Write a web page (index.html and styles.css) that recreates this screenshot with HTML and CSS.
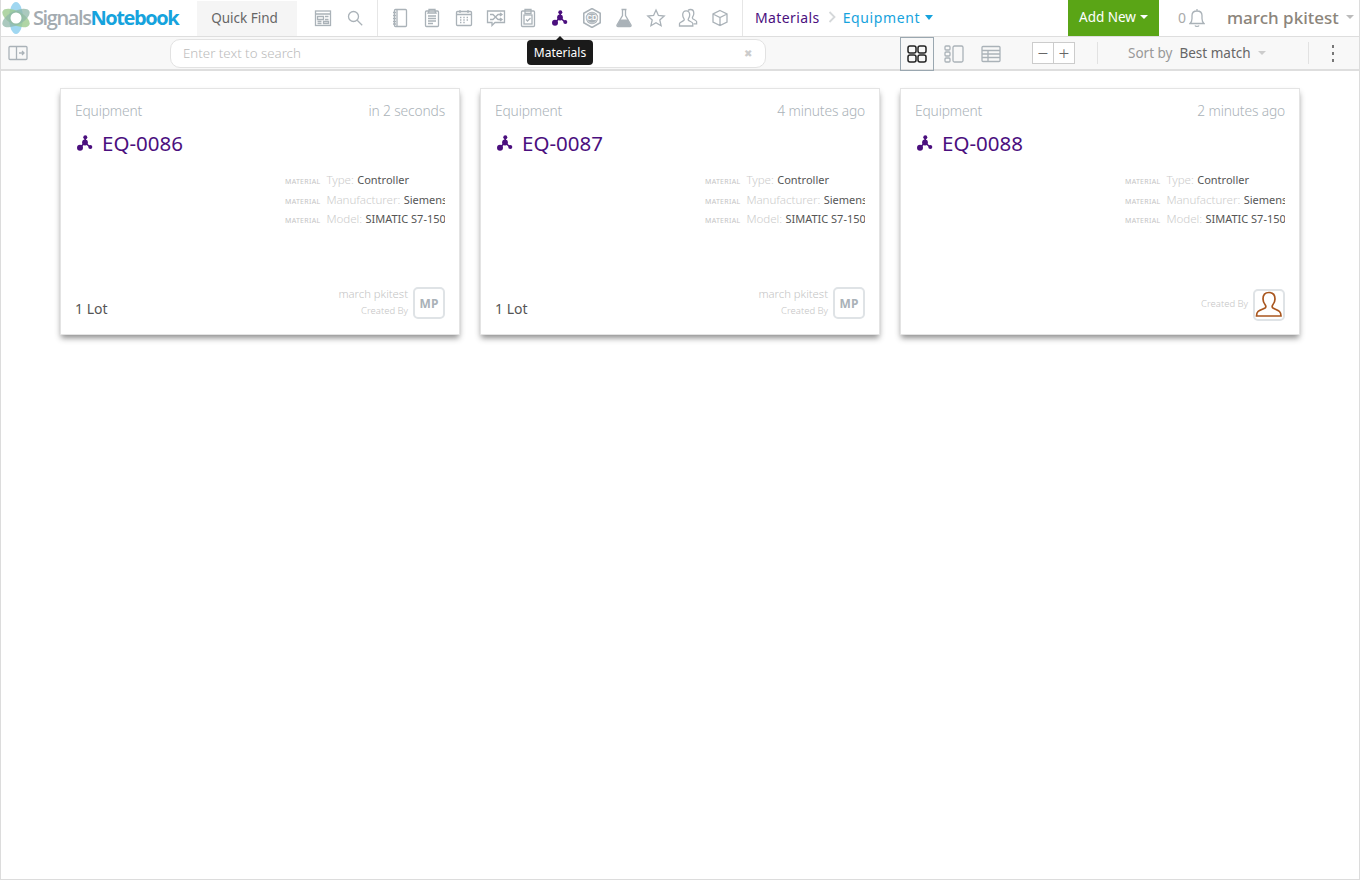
FILE: index.html
```html
<!DOCTYPE html>
<html lang="en">
<head>
<meta charset="utf-8">
<title>Signals Notebook</title>
<link rel="stylesheet" href="styles.css">
</head>
<body>
<div class="page">
  <header class="topbar">
    <a class="logo">
      <svg class="logo-mark" width="32" height="34" viewBox="0 0 32 34"><ellipse cx="15" cy="17" rx="7" ry="16" fill="#8fd0ee" opacity=".85"/><ellipse cx="15" cy="17" rx="15" ry="7" transform="rotate(28 15 17)" fill="#9ccb8f" opacity=".8"/><ellipse cx="15" cy="17" rx="15" ry="7" transform="rotate(-28 15 17)" fill="#8fb7a8" opacity=".75"/><circle cx="15" cy="17" r="5.5" fill="#fff"/></svg>
      <span class="logo-text">Signals<b>Notebook</b></span>
    </a>
    <div class="quick-find">Quick Find</div>
    <div class="nav-icons first">
      <span class="nav-icon"><svg width="18" height="18" viewBox="0 0 18 18" class="ln"><rect x="1.5" y="2" width="15" height="14.5"/><path d="M1.5 5h15M3.5 7.5h6v3h-6zM11 7.5h3.5M11 10.5h3.5M3.500 12.500h4M3.500 14.500h4M9.500 12.500h5v2h-5z"/></svg></span>
      <span class="nav-icon"><svg width="18" height="18" viewBox="0 0 18 18" class="ln"><circle cx="7.500" cy="7.500" r="5"/><path d="M11.200 11.200l5 5"/></svg></span>
    </div>
    <div class="nav-icons">
      <span class="nav-icon"><svg width="18" height="20" viewBox="0 0 18 20" class="ln"><rect x="3.500" y="1.500" width="12" height="17" rx="1"/><path d="M6 1.500v17M2 4.500h3M2 7.500h3M2 10.500h3M2 13.500h3M2 16h3"/></svg></span>
      <span class="nav-icon"><svg width="18" height="20" viewBox="0 0 18 20" class="ln"><rect x="2.500" y="3" width="13" height="15.500" rx="1"/><path d="M6 3V1.500h6V3l1 2H5zM5 8h8M5 10.500h8M5 13h8M5 15.500h5"/></svg></span>
      <span class="nav-icon"><svg width="18" height="18" viewBox="0 0 18 18" class="ln"><rect x="1.500" y="2.500" width="15" height="14" rx="1"/><path d="M1.500 5.500h15M5 1v3M13 1v3M5 8.500h1.400M8.300 8.500h1.400M11.600 8.500h1.400M5 11h1.400M8.300 11h1.400M11.600 11h1.400M5 13.500h1.400M8.300 13.500h1.400"/></svg></span>
      <span class="nav-icon"><svg width="20" height="18" viewBox="0 0 20 18" class="ln"><path d="M1.500 2h17v11.500H9L6 16.500v-3H1.500z"/><path d="M4 5.500h3l5 5h3.500M4 10.500h3l5-5h3.500M14 4l2 1.500L14 7M14 9l2 1.500L14 12"/></svg></span>
      <span class="nav-icon"><svg width="18" height="20" viewBox="0 0 18 20" class="ln"><rect x="2.500" y="3" width="13" height="15.500" rx="1"/><rect x="5" y="7" width="8" height="9"/><path d="M6 3V1.500h6V3v2.500H6zM7 11.500l1.500 1.500 3-3"/></svg></span>
      <span class="nav-icon"><svg width="18" height="18" viewBox="0 0 18 18"><use href="#mol"/></svg></span>
      <span class="nav-icon"><svg width="20" height="20" viewBox="1 1 18 18"><path d="M10 1.500l7.400 4.200v8.600L10 18.500l-7.400-4.200V5.700z" fill="none" stroke="#aab2b8" stroke-width="1.400"/><circle cx="10" cy="10" r="5.600" fill="#aab2b8"/><circle cx="10" cy="10" r="4.500" fill="none" stroke="#fff" stroke-width=".4"/><text x="10" y="12.200" class="cd-text">CD</text></svg></span>
      <span class="nav-icon"><svg width="18" height="20" viewBox="0 0 18 20" class="ln"><path d="M6.500 1.500h5M7.500 1.500v6L2 17c-.4 1 .2 1.500 1 1.500h12c.8 0 1.400-.5 1-1.500l-5.500-9.500v-6"/><path class="flask-fill" d="M5 11.500h8l3 6.500H2z"/></svg></span>
      <span class="nav-icon"><svg width="20" height="20" viewBox="0 0 20 20" class="ln"><path d="M10 2l2.400 5.400 5.800.6-4.400 3.900 1.300 5.800L10 14.700l-5.100 3 1.300-5.800L1.800 8l5.800-.6z"/></svg></span>
      <span class="nav-icon"><svg width="20" height="20" viewBox="0 0 20 20" class="ln"><path d="M1.500 18v-2.500c0-1 3.800-2.500 4.500-3.200.4-.6.300-1.300-.2-2C5 9.300 4.700 8 4.700 6.800c0-2.500 1.400-4 3.500-4s3.500 1.500 3.500 4c0 1.200-.3 2.500-1.100 3.500-.5.700-.6 1.400-.2 2 .7.700 4.400 2.200 4.400 3.200V18z"/><path d="M10 2.500c.8-.8 1.800-1 2.500-1 2 0 3.300 1.500 3.300 3.800 0 1.200-.3 2.400-1 3.400-.5.700-.6 1.300-.2 1.900.7.700 4 2 4 3v2.200h-3"/></svg></span>
      <span class="nav-icon"><svg width="18" height="18" viewBox="0 0 18 18" class="ln"><path d="M9 1.500l7 3.500v8l-7 3.500L2 13V5zM2 5l7 3.500L16 5M9 8.500v8"/></svg></span>
    </div>
    <nav class="crumbs">
      <span class="crumb-root">Materials</span>
      <svg class="crumb-sep" width="8" height="12" viewBox="0 0 8 12"><path d="M1.500 1l5 5-5 5" fill="none" stroke="#d5d8da" stroke-width="1.800"/></svg>
      <span class="crumb-cur">Equipment</span>
      <i class="caret caret-blue"></i>
    </nav>
    <button class="add-new">Add New<i class="caret caret-white"></i></button>
    <div class="notif">
      <span>0</span>
      <svg width="16" height="20" viewBox="0 0 16 20" class="ln"><path d="M1 15.500c1.500-1 2-2.500 2-5V7.500C3 4.500 5 3 8 3s5 1.500 5 4.500v3c0 2.500.5 4 2 5zM6 17.500c.5 1.200 3.500 1.200 4 0M8 3V1"/></svg>
    </div>
    <div class="user">march pkitest<i class="caret caret-grey"></i></div>
  </header>

  <div class="toolbar">
    <span class="panel-toggle"><svg width="20" height="16" viewBox="0 0 20 16" class="ln"><rect x="1" y="1.500" width="18" height="13" rx="1"/><path d="M8.500 1.500v13M11 8h5M14 6l2 2-2 2"/></svg></span>
    <div class="search">
      <span class="search-text">Enter text to search</span>
      <span class="search-clear">✖</span>
    </div>
    <div class="views">
      <span class="view active"><svg width="20" height="18" viewBox="0 0 20 18" class="ln dark"><rect x="1" y="1" width="8" height="7" rx="2"/><rect x="11" y="1" width="8" height="7" rx="2"/><rect x="1" y="10" width="8" height="7" rx="2"/><rect x="11" y="10" width="8" height="7" rx="2"/></svg></span>
      <span class="view"><svg width="20" height="18" viewBox="0 0 20 18" class="ln"><rect x="1" y="1" width="5" height="4" rx="1"/><rect x="1" y="7" width="5" height="4" rx="1"/><rect x="1" y="13" width="5" height="4" rx="1"/><rect x="9" y="1" width="10" height="16" rx="1.500"/></svg></span>
      <span class="view"><svg width="20" height="18" viewBox="0 0 20 18" class="ln"><rect x="1" y="1.500" width="18" height="15" rx="1"/><path d="M1 5.500h18M1 9h18M1 12.500h18M7 5.500v11"/></svg></span>
    </div>
    <div class="zoomer"><span class="zoom-btn">−</span><span class="zoom-btn">+</span></div>
    <div class="sort">
      <span class="sort-label">Sort by</span>
      <span class="sort-value">Best match</span>
      <i class="caret caret-light"></i>
    </div>
    <div class="more"><i></i><i></i><i></i></div>
  </div>

  <main class="cards">
    <article class="card">
      <div class="card-head"><span>Equipment</span><span>in 2 seconds</span></div>
      <h2 class="card-title"><svg width="18" height="18" viewBox="0 0 18 18"><use href="#mol"/></svg>EQ-0086</h2>
      <div class="attrs">
        <div class="attr"><small>MATERIAL</small><span class="k">Type:</span><span class="v">Controller</span></div>
        <div class="attr"><small>MATERIAL</small><span class="k">Manufacturer:</span><span class="v">Siemens</span></div>
        <div class="attr"><small>MATERIAL</small><span class="k">Model:</span><span class="v">SIMATIC S7-1500</span></div>
      </div>
      <div class="card-foot">
        <span class="lots">1 Lot</span>
        <div class="creator"><div class="creator-text"><span class="name">march pkitest</span><span class="by">Created By</span></div><span class="avatar">MP</span></div>
      </div>
    </article>
    <article class="card">
      <div class="card-head"><span>Equipment</span><span>4 minutes ago</span></div>
      <h2 class="card-title"><svg width="18" height="18" viewBox="0 0 18 18"><use href="#mol"/></svg>EQ-0087</h2>
      <div class="attrs">
        <div class="attr"><small>MATERIAL</small><span class="k">Type:</span><span class="v">Controller</span></div>
        <div class="attr"><small>MATERIAL</small><span class="k">Manufacturer:</span><span class="v">Siemens</span></div>
        <div class="attr"><small>MATERIAL</small><span class="k">Model:</span><span class="v">SIMATIC S7-1500</span></div>
      </div>
      <div class="card-foot">
        <span class="lots">1 Lot</span>
        <div class="creator"><div class="creator-text"><span class="name">march pkitest</span><span class="by">Created By</span></div><span class="avatar">MP</span></div>
      </div>
    </article>
    <article class="card">
      <div class="card-head"><span>Equipment</span><span>2 minutes ago</span></div>
      <h2 class="card-title"><svg width="18" height="18" viewBox="0 0 18 18"><use href="#mol"/></svg>EQ-0088</h2>
      <div class="attrs">
        <div class="attr"><small>MATERIAL</small><span class="k">Type:</span><span class="v">Controller</span></div>
        <div class="attr"><small>MATERIAL</small><span class="k">Manufacturer:</span><span class="v">Siemens</span></div>
        <div class="attr"><small>MATERIAL</small><span class="k">Model:</span><span class="v">SIMATIC S7-1500</span></div>
      </div>
      <div class="card-foot">
        <span class="lots"></span>
        <div class="creator lone"><div class="creator-text"><span class="by">Created By</span></div><span class="avatar photo"><svg width="28" height="28" viewBox="0 0 28 28"><path d="M14 1.500c4 0 6 2.800 6 6.500 0 2.500-1 4.500-2.300 6-.8 1-.7 2.300.3 3 1.500 1 5 2 6.500 3.500.8.800 1.500 2 1.500 4.500H1.500c0-2.500.7-3.700 1.500-4.500C4.500 19 8.500 18 10 17c1-.7 1.100-2 .3-3C9 12.500 8 10.500 8 8c0-3.700 2-6.500 6-6.500z" fill="none" stroke="#a9561e" stroke-width="1.700"/></svg></span></div>
      </div>
    </article>
  </main>

  <div class="tooltip">Materials</div>
</div>
<svg class="defs" width="0" height="0"><defs><g id="mol" fill="#4b0f7e" stroke="#4b0f7e"><path d="M9.300 3.500L9 8.500 4.200 13.500M9 8.500l5 4.500" fill="none" stroke-width="1.600"/><g stroke="none"><circle cx="9.300" cy="3.300" r="2"/><circle cx="9" cy="8.500" r="2.900"/><circle cx="4" cy="13.700" r="3"/><circle cx="14.300" cy="13" r="2"/></g></g></defs></svg>
</body>
</html>
```
FILE: styles.css
```css
* { box-sizing: border-box; }
html, body { margin: 0; height: 100%; }
body { font-family: "Noto Sans", "Open Sans", sans-serif; color: #444; background: #fff; }
.defs { position: absolute; }
.page { position: relative; height: 880px; border: 1px solid #dcdcdc; border-top: 0; display: flex; flex-direction: column; overflow: hidden; }

.ln { fill: none; stroke: #aab2b8; stroke-width: 1.300; }
.ln.dark { stroke: #222; stroke-width: 1.500; }
.flask-fill { fill: #aab2b8; stroke: none; }

.topbar { height: 37px; flex: none; display: flex; align-items: center; border-bottom: 1px solid #dedede; margin-left: -1px; margin-right: -1px; }
.logo { width: 197px; flex: none; display: flex; align-items: center; padding-left: 1px; }
.logo-text { font-family: "Open Sans", sans-serif; font-size: 20px; letter-spacing: -1.400px; color: #a3abb0; font-weight: 600; margin-bottom: 2px; }
.logo-text b { color: #16a3dd; font-weight: 700; }
.quick-find { width: 100px; height: 35px; align-self: flex-end; background: #f5f5f5; color: #666; font-size: 13.500px; padding: 0 5px 2px 0; display: flex; align-items: center; justify-content: center; }
.nav-icons { display: flex; padding: 0 6px 0 0; border-right: 1px solid #e6e6e6; height: 36px; margin-right: 6px; align-items: center; }
.nav-icons.first { padding-left: 10px; margin-right: 6px; }
.nav-icon { width: 32px; height: 32px; display: flex; align-items: center; justify-content: center; }
.cd-text { font: 700 6.500px "Liberation Sans", sans-serif; fill: #fff; text-anchor: middle; }

.crumbs { display: flex; align-items: center; font-size: 14px; letter-spacing: .4px; margin-left: 6px; padding-bottom: 2px; width: 313px; flex: none; }
.crumb-root { color: #4b0f7e; }
.crumb-sep { margin: 0 7px 0 8px; }
.crumb-cur { color: #16a3dd; letter-spacing: .6px; }
.caret { display: inline-block; width: 0; height: 0; border-left: 4.500px solid transparent; border-right: 4.500px solid transparent; border-top: 5px solid #16a3dd; }
.caret-blue { margin-left: 5px; }
.caret-white { border-top-color: #fff; border-left-width: 4px; border-right-width: 4px; border-top-width: 4px; margin-left: 4px; }
.caret-grey { border-top-color: #bbb; border-left-width: 4px; border-right-width: 4px; border-top-width: 4px; margin-left: 7px; }
.caret-light { border-top-color: #ccc; border-left-width: 4px; border-right-width: 4px; border-top-width: 4px; margin-left: 7px; }
.add-new { width: 91px; height: 36px; align-self: flex-start; border: 0; padding: 0 0 2px; background: #5aa516; color: #fff; font: 13.500px "Noto Sans", sans-serif; display: flex; align-items: center; justify-content: center; }
.notif { display: flex; align-items: center; gap: 3px; margin-left: 19px; color: #aaa; font-size: 14px; width: 49px; flex: none; padding-bottom: 1px; }
.user { font-size: 17px; font-weight: 500; color: #8c857b; white-space: nowrap; display: flex; align-items: center; padding-bottom: 2px; }

.toolbar { height: 34px; flex: none; display: flex; align-items: center; background: #f8f8f8; border-bottom: 2px solid #dedede; padding-left: 7px; position: relative; }
.panel-toggle { width: 20px; display: flex; margin-right: 142px; }
.search { width: 596px; height: 29px; background: #fff; border: 1px solid #e2e2e2; border-radius: 10px; display: flex; align-items: center; justify-content: space-between; padding: 0 12px; }
.search-text { font-size: 13.300px; color: #bbb; font-weight: 300; }
.search-clear { font-size: 10px; color: #ccc; margin-right: 1px; }
.views { display: flex; margin-left: 134px; align-self: flex-start; }
.view { width: 34px; height: 34px; margin-right: 3px; display: flex; align-items: center; justify-content: center; }
.view.active { border: 1px solid #9aa7b0; }
.zoomer { display: flex; width: 43px; height: 22px; border: 1px solid #ccc; background: #fff; margin-left: 21px; }
.zoom-btn { flex: 1; display: flex; align-items: center; justify-content: center; color: #666; font-size: 19px; font-weight: 300; line-height: 1; }
.zoom-btn + .zoom-btn { border-left: 1px solid #ccc; }
.sort { display: flex; align-items: center; height: 22px; margin-left: 22px; padding-left: 30px; padding-bottom: 1px; width: 212px; flex: none; border-left: 1px solid #e2e2e2; border-right: 1px solid #e2e2e2; font-size: 13.500px; }
.sort-label { color: #999; margin-right: 7px; }
.sort-value { color: #666; }
.more { display: flex; flex-direction: column; gap: 4px; margin-left: 23px; }
.more i { width: 2px; height: 3px; background: #777; }

.cards { display: flex; gap: 20px; padding: 17px 59px 0; }
.card { width: 400px; height: 247px; flex: none; padding: 13px 14px 15px; background: #fff; border: 1px solid #e4e4e4; box-shadow: 0 4px 6px -1px rgba(0,0,0,.45); display: flex; flex-direction: column; }
.card-head { display: flex; justify-content: space-between; font-size: 13.800px; letter-spacing: -.15px; font-weight: 300; color: #aab2b8; line-height: 18px; }
.card-title { margin: 10px 0 0; padding-left: 1px; font-size: 20.500px; font-weight: 400; color: #4b0f7e; display: flex; align-items: center; gap: 8px; line-height: 26px; }
.attrs { margin: 16px 0 0 210px; width: 160px; overflow: hidden; }
.attr { display: flex; align-items: baseline; white-space: nowrap; height: 19.500px; font-size: 11px; }
.attr small { font-size: 7px; letter-spacing: .3px; color: #c4c4c4; margin-right: 6px; flex: none; }
.attr .k { font-size: 11.600px; font-weight: 300; color: #ccc; margin-right: 3.500px; letter-spacing: -.05px; }
.attr .v { color: #555; }
.card-foot { margin-top: auto; display: flex; justify-content: space-between; align-items: flex-end; }
.lots { font-size: 14px; line-height: 20px; color: #555; }
.creator { display: flex; align-items: center; gap: 5px; }
.creator.lone .creator-text { margin-bottom: 1px; }
.creator-text { display: flex; flex-direction: column; align-items: flex-end; font-weight: 300; color: #c4c4c4; }
.name { font-size: 11.300px; line-height: 17px; }
.by { font-size: 9.500px; line-height: 17px; }
.avatar { width: 32px; height: 32px; flex: none; margin-bottom: -2px; border: 2px solid #dfe3e6; border-radius: 5px; display: flex; align-items: center; justify-content: center; font-size: 12px; font-weight: 700; color: #aab2b8; overflow: hidden; }

.tooltip { position: absolute; left: 526px; top: 40px; width: 66px; height: 25px; background: #1a1a1a; color: #fff; font-size: 12px; border-radius: 4px; display: flex; align-items: center; justify-content: center; }
.tooltip::before { content: ""; position: absolute; left: 29px; top: -4px; border-left: 4px solid transparent; border-right: 4px solid transparent; border-bottom: 4px solid #1a1a1a; }
```
